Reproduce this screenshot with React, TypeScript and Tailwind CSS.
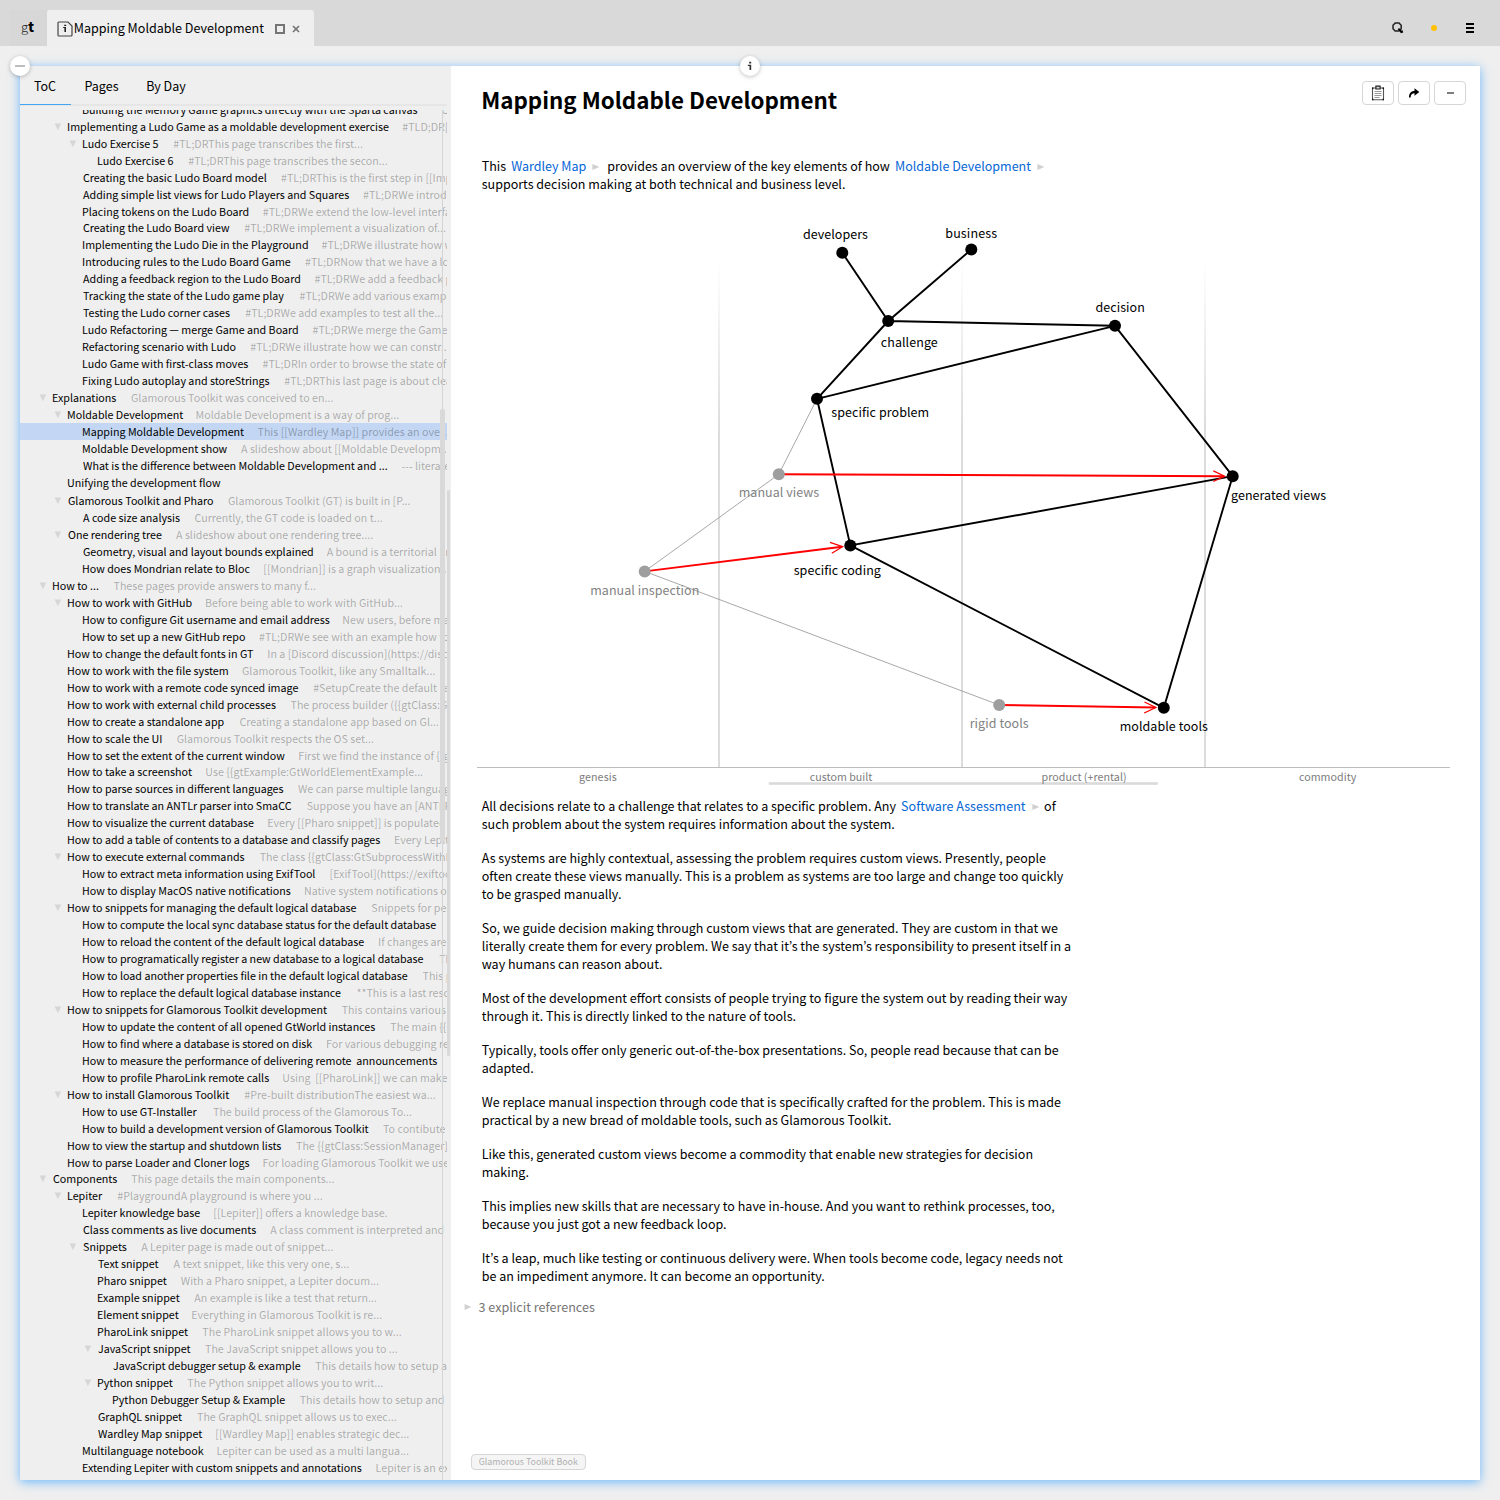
import React from "react";

type Row = { y: number; level: number; open?: boolean; title: string; px?: number; preview?: string };

const r = (y: number, level: number, title: string, px?: number, preview?: string, open?: boolean): Row => ({
  y,
  level,
  title,
  px,
  preview,
  open,
});

// y: row centre, level: nesting depth, px: x coordinate where the preview starts
const ROWS: Row[] = [
  r(110, 3, "Building the Memory Game graphics directly with the Sparta canvas", 441.5, "Currently"),
  r(127, 2, "Implementing a Ludo Game as a moldable development exercise", 402.3, "#TLD;DR[[Implementing", true),
  r(144, 3, "Ludo Exercise 5", 173.3, "#TL;DRThis page transcribes the first...", true),
  r(161, 4, "Ludo Exercise 6", 188.3, "#TL;DRThis page transcribes the secon..."),
  r(178, 3, "Creating the basic Ludo Board model", 281, "#TL;DRThis is the first step in [[Implementing"),
  r(195, 3, "Adding simple list views for Ludo Players and Squares", 363, "#TL;DRWe introduce simple"),
  r(212, 3, "Placing tokens on the Ludo Board", 262.8, "#TL;DRWe extend the low-level interface"),
  r(228, 3, "Creating the Ludo Board view", 244.3, "#TL;DRWe implement a visualization of..."),
  r(245, 3, "Implementing the Ludo Die in the Playground", 321.5, "#TL;DRWe illustrate how we"),
  r(262, 3, "Introducing rules to the Ludo Board Game", 305, "#TL;DRNow that we have a look"),
  r(279, 3, "Adding a feedback region to the Ludo Board", 314.5, "#TL;DRWe add a feedback panel"),
  r(296, 3, "Tracking the state of the Ludo game play", 299.5, "#TL;DRWe add various examples"),
  r(313, 3, "Testing the Ludo corner cases", 245.3, "#TL;DRWe add examples to test all the..."),
  r(330, 3, "Ludo Refactoring — merge Game and Board", 312.5, "#TL;DRWe merge the Game"),
  r(347, 3, "Refactoring scenario with Ludo", 250.3, "#TL;DRWe illustrate how we can constr..."),
  r(364, 3, "Ludo Game with first-class moves", 262.5, "#TL;DRIn order to browse the state of"),
  r(381, 3, "Fixing Ludo autoplay and storeStrings", 284.3, "#TL;DRThis last page is about clean"),
  r(398, 1, "Explanations", 131, "Glamorous Toolkit was conceived to en...", true),
  r(415, 2, "Moldable Development", 196.2, "Moldable Development is a way of prog...", true),
  r(432, 3, "Mapping Moldable Development", 257.5, "This [[Wardley Map]] provides an ove..."),
  r(449, 3, "Moldable Development show", 241, "A slideshow about [[Moldable Developm..."),
  r(466, 3, "What is the difference between Moldable Development and ...", 401.5, "--- literate programming"),
  r(483, 2, "Unifying the development flow"),
  r(501, 2, "Glamorous Toolkit and Pharo", 228, "Glamorous Toolkit (GT) is built in [P...", true),
  r(518, 3, "A code size analysis", 194.5, "Currently, the GT code is loaded on t..."),
  r(535, 2, "One rendering tree", 176, "A slideshow about one rendering tree....", true),
  r(552, 3, "Geometry, visual and layout bounds explained", 326.7, "A bound is a territorial limit"),
  r(569, 3, "How does Mondrian relate to Bloc", 264, "[[Mondrian]] is a graph visualization..."),
  r(586, 1, "How to ...", 113.5, "These pages provide answers to many f...", true),
  r(603, 2, "How to work with GitHub", 205.7, "Before being able to work with GitHub...", true),
  r(620, 3, "How to configure Git username and email address", 343, "New users, before making"),
  r(637, 3, "How to set up a new GitHub repo", 259, "#TL;DRWe see with an example how to"),
  r(654, 2, "How to change the default fonts in GT", 268, "In a [Discord discussion](https://discord"),
  r(671, 2, "How to work with the file system", 242, "Glamorous Toolkit, like any Smalltalk..."),
  r(688, 2, "How to work with a remote code synced image", 313.2, "#SetupCreate the default remote"),
  r(705, 2, "How to work with external child processes", 290.5, "The process builder ({{gtClass:GtExternal"),
  r(722, 2, "How to create a standalone app", 239.5, "Creating a standalone app based on Gl..."),
  r(739, 2, "How to scale the UI", 176.7, "Glamorous Toolkit respects the OS set..."),
  r(756, 2, "How to set the extent of the current window", 299, "First we find the instance of {{gtClass"),
  r(772, 2, "How to take a screenshot", 206, "Use {{gtExample:GtWorldElementExample..."),
  r(789, 2, "How to parse sources in different languages", 298, "We can parse multiple languages"),
  r(806, 2, "How to translate an ANTLr parser into SmaCC", 306.7, "Suppose you have an [ANTLR]"),
  r(823, 2, "How to visualize the current database", 268, "Every [[Pharo snippet]] is populated"),
  r(840, 2, "How to add a table of contents to a database and classify pages", 394.7, "Every Lepiter database"),
  r(857, 2, "How to execute external commands", 259.7, "The class {{gtClass:GtSubprocessWithInMemory", true),
  r(874, 3, "How to extract meta information using ExifTool", 330.3, "[ExifTool](https://exiftool.org"),
  r(891, 3, "How to display MacOS native notifications", 304.7, "Native system notifications on"),
  r(908, 2, "How to snippets for managing the default logical database", 371.3, "Snippets for performing", true),
  r(925, 3, "How to compute the local sync database status for the default database"),
  r(942, 3, "How to reload the content of the default logical database", 378.7, "If changes are made"),
  r(959, 3, "How to programatically register a new database to a logical database", 439.2, "This"),
  r(976, 3, "How to load another properties file in the default logical database", 422.5, "This page"),
  r(993, 3, "How to replace the default logical database instance", 356.5, "**This is a last resort"),
  r(1010, 2, "How to snippets for Glamorous Toolkit development", 341.7, "This contains various", true),
  r(1027, 3, "How to update the content of all opened GtWorld instances", 390.3, "The main {{gtClass"),
  r(1044, 3, "How to find where a database is stored on disk", 326.7, "For various debugging reasons"),
  r(1061, 3, "How to measure the performance of delivering remote  announcements"),
  r(1078, 3, "How to profile PharoLink remote calls", 283, "Using  [[PharoLink]] we can make"),
  r(1095, 2, "How to install Glamorous Toolkit", 244.3, "#Pre-built distributionThe easiest wa...", true),
  r(1112, 3, "How to use GT-Installer", 213, "The build process of the Glamorous To..."),
  r(1129, 3, "How to build a development version of Glamorous Toolkit", 383, "To contibute to"),
  r(1146, 2, "How to view the startup and shutdown lists", 296, "The {{gtClass:SessionManager}}"),
  r(1163, 2, "How to parse Loader and Cloner logs", 263.2, "For loading Glamorous Toolkit we use"),
  r(1179, 1, "Components", 131.3, "This page details the main components...", true),
  r(1196, 2, "Lepiter", 117.3, "#PlaygroundA playground is where you ...", true),
  r(1213, 3, "Lepiter knowledge base", 214, "[[Lepiter]] offers a knowledge base."),
  r(1230, 3, "Class comments as live documents", 270.2, "A class comment is interpreted and"),
  r(1247, 3, "Snippets", 141.2, "A Lepiter page is made out of snippet...", true),
  r(1264, 4, "Text snippet", 173.5, "A text snippet, like this very one, s..."),
  r(1281, 4, "Pharo snippet", 180.8, "With a Pharo snippet, a Lepiter docum..."),
  r(1298, 4, "Example snippet", 194.3, "An example is like a test that return..."),
  r(1315, 4, "Element snippet", 192, "Everything in Glamorous Toolkit is re..."),
  r(1332, 4, "PharoLink snippet", 202.3, "The PharoLink snippet allows you to w..."),
  r(1349, 4, "JavaScript snippet", 205, "The JavaScript snippet allows you to ...", true),
  r(1366, 5, "JavaScript debugger setup & example", 315.3, "This details how to setup and"),
  r(1383, 4, "Python snippet", 187.3, "The Python snippet allows you to writ...", true),
  r(1400, 5, "Python Debugger Setup & Example", 299.7, "This details how to setup and use"),
  r(1417, 4, "GraphQL snippet", 197, "The GraphQL snippet allows us to exec..."),
  r(1434, 4, "Wardley Map snippet", 216, "[[Wardley Map]] enables strategic dec..."),
  r(1451, 3, "Multilanguage notebook", 217.3, "Lepiter can be used as a multi langua..."),
  r(1468, 3, "Extending Lepiter with custom snippets and annotations", 376.3, "Lepiter is an extensible"),
];

function TocRow({ row, height }: { row: Row; height: number }) {
  const roundStart = /^[ACGJOSTW]/.test(row.title);
  const x = 37 + row.level * 15 + (roundStart ? 1 : 0);
  const bearing = /^[HLENBPIFMRU[]/.test(row.preview ?? "") ? 0.7 : 0;
  return (
    <div
      className={`relative flex shrink-0 items-start whitespace-pre leading-[17px] ${
        row.y === 432 ? "bg-[#c3d7f4]" : ""
      }`}
      style={{ height, paddingLeft: x - 20 }}
    >
      {row.open && (
        <svg className="absolute top-[4.5px]" style={{ left: 3.7 + row.level * 15 }} width="8" height="8">
          <path d="M0.6 0.6H7.2L3.9 7.2Z" fill="#d6d6d6" />
        </svg>
      )}
      <span className="shrink-0 text-black" style={{ width: row.px ? row.px - bearing - x : undefined }}>
        {row.title}
      </span>
      {row.preview && <span className="text-black/30 text-[10.68px]">{row.preview}</span>}
    </div>
  );
}

function Sidebar() {
  return (
    <div className="relative flex w-[430.5px] shrink-0 flex-col bg-[#efefef]">
      <div className="mr-[3.5px] flex h-[40px] border-b-2 border-[#e6e6e6] text-[12.5px]">
        <div className="-mb-[1px] flex h-[39px] w-[51px] items-center justify-center border-b-[1.5px] border-[#45a5f5] pt-[3px] pr-px">
          ToC
        </div>
        <div className="flex w-[61px] items-center justify-center pt-[3px]">Pages</div>
        <div className="flex w-[68px] items-center justify-center pt-[3px]">By Day</div>
      </div>
      <div className="mt-[4px] mr-[3.5px] flex h-[1370px] flex-col overflow-hidden text-[10.71px]">
        <div className="-mt-[9px] flex flex-col">
          {ROWS.map((row, i) => (
            <TocRow key={row.y} row={row} height={(ROWS[i + 1]?.y ?? 1485) - row.y} />
          ))}
        </div>
      </div>
      <div className="absolute top-[44px] left-[422px] h-[1370px] w-px bg-[#d4d4d4]" />
      <div className="absolute top-[343px] left-[420px] h-[434px] w-[5px] rounded-[2px] bg-[#d9d9d9]" />
      <div className="absolute top-[424px] left-[427px] h-[566px] w-[3px] rounded-[2px] bg-[#d9d9d9]" />
    </div>
  );
}

const NODES: { x: number; y: number; label: string; lx: number; ly: number; w: number; gray?: boolean }[] = [
  { x: 842.3, y: 252.8, label: "developers", lx: 802.9, ly: 239, w: 65 },
  { x: 971.3, y: 249.5, label: "business", lx: 945.3, ly: 238, w: 51.8 },
  { x: 888.2, y: 321, label: "challenge", lx: 880.8, ly: 347, w: 57 },
  { x: 1115, y: 325.8, label: "decision", lx: 1095.4, ly: 312, w: 49.4 },
  { x: 817, y: 398.8, label: "specific problem", lx: 831.2, ly: 417, w: 98 },
  { x: 778.8, y: 474.3, label: "manual views", lx: 738.7, ly: 497, w: 80.5, gray: true },
  { x: 1232.7, y: 476.2, label: "generated views", lx: 1231, ly: 500, w: 95.2 },
  { x: 850.3, y: 545.4, label: "specific coding", lx: 793.7, ly: 575, w: 87.2 },
  { x: 644.7, y: 571.4, label: "manual inspection", lx: 590.2, ly: 595, w: 109.1, gray: true },
  { x: 999.2, y: 705, label: "rigid tools", lx: 969.7, ly: 728, w: 59, gray: true },
  { x: 1163.8, y: 707.8, label: "moldable tools", lx: 1119.7, ly: 731, w: 88.2 },
];

function WardleyMap() {
  return (
    <svg className="-ml-[5px] block" width="973" height="604" viewBox="477 193 973 604">
      <defs>
        <linearGradient id="fade" gradientUnits="userSpaceOnUse" x1="0" y1="260" x2="0" y2="430">
          <stop offset="0" stopColor="#d8d8d8" stopOpacity="0" />
          <stop offset="1" stopColor="#d8d8d8" />
        </linearGradient>
      </defs>
      {[719, 962, 1205].map((x) => (
        <rect key={x} x={x - 0.9} y="260" width="1.8" height="507" fill="url(#fade)" />
      ))}
      <rect x="477" y="767" width="973" height="1" fill="#bdbdbd" />
      <rect x="768.8" y="782.2" width="389" height="2.6" fill="#dadada" />
      <g fontSize="10.7" fill="#7c7c7c">
        <text x="579" y="781" textLength="37.8">genesis</text>
        <text x="809.8" y="781" textLength="62.6">custom built</text>
        <text x="1041.6" y="781" textLength="85">product (+rental)</text>
        <text x="1298.9" y="781" textLength="57.5">commodity</text>
      </g>
      <path
        d="M817 398.8L778.8 474.3L644.7 571.4L999.2 705"
        stroke="#9e9e9e"
        strokeWidth="0.9"
        fill="none"
      />
      <path
        d="M842.3 252.8L888.2 321L971.3 249.5M888.2 321L1115 325.8L817 398.8L888.2 321M1115 325.8L1232.7 476.2L850.3 545.4L817 398.8M850.3 545.4L1163.8 707.8L1232.7 476.2"
        stroke="#000"
        strokeWidth="1.9"
        fill="none"
      />
      <path
        d="M778.8 474.3L1224 476.2M644.7 571.4L842 546.8M999.2 705L1155.5 707.5"
        stroke="#f00"
        strokeWidth="1.9"
        fill="none"
      />
      <path
        d="M1213.3 470.8L1224.6 476.2L1213.3 481.5M830 542.3L842.6 546.7L831.8 553.2M1144.5 702L1155.8 707.5L1144.2 713"
        stroke="#f00"
        strokeWidth="1.3"
        fill="none"
      />
      {NODES.map((n) => (
        <g key={n.label}>
          <circle cx={n.x} cy={n.y} r="6" fill={n.gray ? "#9e9e9e" : "#000"} />
          <text x={n.lx} y={n.ly} textLength={n.w} fontSize="12.5" fill={n.gray ? "#828282" : "#000"}>
            {n.label}
          </text>
        </g>
      ))}
    </svg>
  );
}

function PageLink({ children, width }: { children: string; width: number }) {
  return (
    <span className="inline-block pl-[2.3px] text-[#0566d6]" style={{ width }}>
      {children}
      <svg className="ml-[6px] inline-block align-[0px]" width="8" height="8">
        <path d="M0.4 1L7.4 4L0.4 7Z" fill="#d0d0d0" />
      </svg>
    </span>
  );
}

const PARAGRAPHS: string[][] = [
  [
    "As systems are highly contextual, assessing the problem requires custom views. Presently, people",
    "often create these views manually. This is a problem as systems are too large and change too quickly",
    "to be grasped manually.",
  ],
  [
    "So, we guide decision making through custom views that are generated. They are custom in that we",
    "literally create them for every problem. We say that it’s the system’s responsibility to present itself in a",
    "way humans can reason about.",
  ],
  [
    "Most of the development effort consists of people trying to figure the system out by reading their way",
    "through it. This is directly linked to the nature of tools.",
  ],
  ["Typically, tools offer only generic out-of-the-box presentations. So, people read because that can be", "adapted."],
  [
    "We replace manual inspection through code that is specifically crafted for the problem. This is made",
    "practical by a new bread of moldable tools, such as Glamorous Toolkit.",
  ],
  ["Like this, generated custom views become a commodity that enable new strategies for decision", "making."],
  [
    "This implies new skills that are necessary to have in-house. And you want to rethink processes, too,",
    "because you just got a new feedback loop.",
  ],
  [
    "It’s a leap, much like testing or continuous delivery were. When tools become code, legacy needs not",
    "be an impediment anymore. It can become an opportunity.",
  ],
];

function Content() {
  return (
    <div className="flex min-w-0 flex-1 flex-col bg-white pl-[31.5px] text-[12.53px] leading-[18px] whitespace-pre">
      <div className="flex h-[91px] justify-between pr-[14px]">
        <h1 className="-ml-[0.8px] pt-[15px] text-[22.35px] leading-[36px] font-bold">Mapping Moldable Development</h1>
        <div className="flex gap-1 pt-[15px]">
          <div className="flex h-6 w-8 items-center justify-center rounded-[4px] border border-[#d6d6d6]">
            <svg width="14" height="16" viewBox="0 0 14 16">
              <path d="M1.5 3H12.5V14.7H1.5Z" fill="none" stroke="#555" strokeWidth="1.1" />
              <path d="M1 2.5H2.4V3.9H1ZM11.6 2.5H13V3.9H11.6ZM1 13.8H2.4V15.2H1ZM11.6 13.8H13V15.2H11.6Z" fill="#111" />
              <path d="M4.9 1.2H9.1V4H4.9Z" fill="#ddd" stroke="#222" strokeWidth="1.2" />
              <path d="M3.5 6.5H10.5M3.5 8.5H10.5M3.5 10.5H10.5M3.5 12.5H8.5" stroke="#999" strokeWidth="1" />
            </svg>
          </div>
          <div className="flex h-6 w-8 items-center justify-center rounded-[4px] border border-[#d6d6d6]">
            <svg width="12" height="12" viewBox="0 0 12 12">
              <path d="M1 10.5C1 6.5 2.8 4 6.5 4V1.2L11.3 5L6.5 8.7V6.2C4.2 6.2 2.8 7.4 2.6 10.5Z" fill="#000" />
            </svg>
          </div>
          <div className="flex h-6 w-8 items-center justify-center rounded-[4px] border border-[#d6d6d6]">
            <div className="h-[2px] w-[7px] bg-[#7d7d7d]" />
          </div>
        </div>
      </div>
      <div className="-ml-[0.3px] h-[36px]">
        <div className="h-[18px]">
          This <PageLink width={98.3}>Wardley Map</PageLink>provides an overview of the key elements of how{" "}
          <PageLink width={152}>Moldable Development</PageLink>
        </div>
        <div>supports decision making at both technical and business level.</div>
      </div>
      <WardleyMap />
      <div className="-ml-[0.3px] flex flex-col gap-4">
        <div>
          <div className="h-[18px]">
            All decisions relate to a challenge that relates to a specific problem. Any{" "}
            <PageLink width={145.3}>Software Assessment</PageLink>of
          </div>
          <div>such problem about the system requires information about the system.</div>
        </div>
        {PARAGRAPHS.map((lines) => (
          <div key={lines[0]}>
            {lines.map((line) => (
              <div key={line}>{line}</div>
            ))}
          </div>
        ))}
      </div>
      <div className="mt-[13px] -ml-[18px] flex items-center text-[12.6px] text-[#757575]">
        <svg className="mr-[6.5px]" width="8" height="8">
          <path d="M0.6 1L7.4 4L0.6 7Z" fill="#d0d0d0" />
        </svg>
        3 explicit references
      </div>
      <div className="mt-auto mb-[10px] -ml-[11.5px] flex h-4 w-[115.5px] items-center justify-center rounded-[4px] border border-[#d6d6d6] bg-[#f5f5f5] text-[8.85px] text-[#b0b0b0]">
        Glamorous Toolkit Book
      </div>
    </div>
  );
}

function TopBar() {
  return (
    <div className="flex h-[46px] items-end bg-[#d9d9d9] pr-[26px] pl-[10px]">
      <div className="flex h-9 w-[37px] items-center justify-center rounded-t-[3px] bg-[#d7d7d7] pr-[2px] pb-[3px] text-[13px] leading-[18px]">
        <span className="font-light text-[#222]">g</span>
        <span className="font-black text-black">t</span>
      </div>
      <div className="flex h-9 w-[267px] items-center rounded-t-[3px] bg-[#efefef] pl-[10px]">
        <svg className="mt-[2px]" width="16" height="16" viewBox="0 0 16 16">
          <path
            d="M1.8 1H11L15 5V14Q15 15 14 15H1.8Q1 15 1 14V2Q1 1 1.8 1Z"
            fill="none"
            stroke="#444"
            strokeWidth="1.2"
          />
          <path d="M7.2 3.8H9.2V5H7.2ZM6.2 6H9V11H7.4V7H6.2Z" fill="#222" />
        </svg>
        <span className="w-[201px] pl-[0.8px] text-[12.55px] leading-[18px] whitespace-pre">
          Mapping Moldable Development
        </span>
        <div className="mt-[2px] ml-px h-[10px] w-[10px] border-2 border-[#757575]" />
        <svg className="mt-[2px] ml-[7px]" width="8" height="8">
          <path d="M1 1L7 7M7 1L1 7" stroke="#757575" strokeWidth="1.7" />
        </svg>
      </div>
      <div className="ml-auto flex h-9 items-center">
        <svg width="12" height="12" viewBox="0 0 12 12">
          <path d="M3.2 0.9H7L9.2 3.2V6.8L7 9H3.2L1 6.8V3.2Z" fill="none" stroke="#222" strokeWidth="1.5" />
          <path d="M6.4 6.6L9 9.4" stroke="#000" strokeWidth="1.8" />
          <path d="M8.3 10.2L10.9 9.4" stroke="#000" strokeWidth="2.4" />
        </svg>
        <div className="ml-[27px] h-[6px] w-[6px] rounded-full bg-[#ffc107]" />
        <div className="ml-[29px] flex flex-col gap-[2px]">
          <div className="h-[2px] w-2 bg-black" />
          <div className="h-[2px] w-2 bg-black" />
          <div className="h-[2px] w-2 bg-black" />
        </div>
      </div>
    </div>
  );
}

export default function App() {
  return (
    <div className="flex h-[1500px] w-[1500px] flex-col overflow-hidden bg-[#efefef] font-['Noto_Sans_CJK_KR',sans-serif] text-black">
      <TopBar />
      <div className="p-5">
        <div className="relative flex h-[1414px] w-[1460px] shadow-[0_2px_10px_rgba(64,165,255,0.75)]">
          <Sidebar />
          <Content />
          <div className="absolute -top-[10px] -left-[10px] flex h-5 w-5 items-center justify-center rounded-full bg-white shadow-[0_1px_4px_rgba(0,0,0,0.25)]">
            <div className="h-[2px] w-[10px] bg-[#bdbdbd]" />
          </div>
          <div className="absolute -top-[10px] left-[720px] flex h-5 w-5 items-center justify-center rounded-full bg-white shadow-[0_1px_4px_rgba(0,0,0,0.25)]">
            <svg width="6" height="10" viewBox="0 0 6 10">
              <path d="M2.2 0.8H4.2V2.4H2.2ZM0.8 3.8H4.2V9H2.5V5H0.8Z" fill="#333" />
            </svg>
          </div>
        </div>
      </div>
    </div>
  );
}
